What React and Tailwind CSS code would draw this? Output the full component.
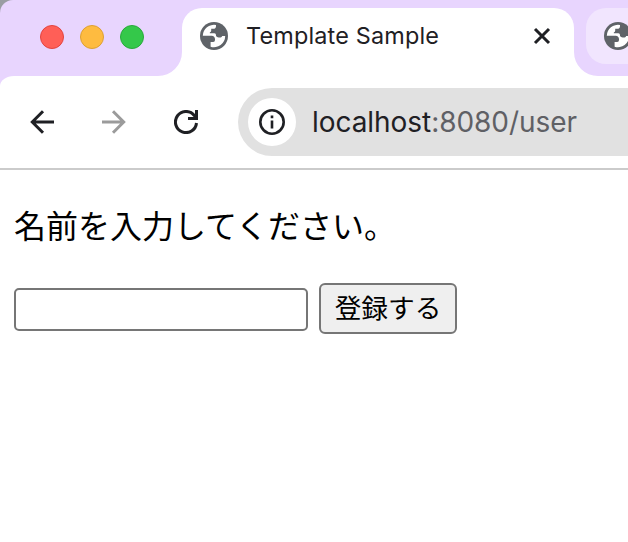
function Globe() {
  return (
    <svg className="h-7 w-7 shrink-0" viewBox="0 0 28 28">
      <circle cx="14" cy="14" r="14" fill="#5f6368" />
      <path
        fill="#fff"
        d="M2.8 13.8A11.2 11.2 0 0 1 16 3V4.2Q15.8 6.8 13.2 6.8H11.2V8.8Q11.2 10.2 9.8 10.4V11.2H14.4Q16 11.4 16 13V14Q16.8 15.4 18.6 15.4H20.6Q21.8 15.2 22.2 14H25.2A11.2 11.2 0 0 1 10.6 24.7V20H13.2Q15 19.8 15 18V17Q14.8 14 11.6 13.8Z"
      />
    </svg>
  );
}

function TabStrip() {
  return (
    <header className="bg-[#9a9da3]">
      <div className="flex h-[76px] items-end rounded-tl-[13px] bg-[#e8d5fe]">
        <div className="flex h-[76px] w-[182px] shrink-0 items-center gap-4 pl-10 pb-[2px]">
          <span className="h-6 w-6 rounded-full border border-[#e2443f] bg-[#ff5f57]" />
          <span className="h-6 w-6 rounded-full border border-[#dda033] bg-[#febb40]" />
          <span className="h-6 w-6 rounded-full border border-[#28a93b] bg-[#34c84a]" />
        </div>
        <div className="relative flex h-[68px] w-[392px] shrink-0 items-center rounded-t-[20px] bg-white pr-[23px] pb-3 pl-[18px]">
          <svg className="absolute bottom-0 -left-6 h-6 w-6" viewBox="0 0 24 24">
            <path d="M24 0A24 24 0 0 1 0 24H24Z" fill="#fff" />
          </svg>
          <svg className="absolute -right-6 bottom-0 h-6 w-6" viewBox="0 0 24 24">
            <path d="M0 0A24 24 0 0 0 24 24H0Z" fill="#fff" />
          </svg>
          <Globe />
          <span className="ml-[18px] flex-1 text-[23.4px] leading-7 tracking-[0.18px] whitespace-nowrap text-[#1f2024]">
            Template Sample
          </span>
          <svg className="h-[18px] w-[18px]" viewBox="0 0 18 18" fill="none" stroke="#1f2024" strokeWidth="3">
            <path d="M2 2L16 16M16 2L2 16" />
          </svg>
        </div>
        <div className="mb-3 ml-3 flex h-14 w-[42px] shrink-0 items-center overflow-hidden rounded-l-[20px] bg-[#f1e5fe] pl-[18px]">
          <Globe />
        </div>
      </div>
    </header>
  );
}

function Toolbar() {
  return (
    <div className="bg-[#e8d5fe]">
      <div className="flex h-[94px] items-center rounded-tl-[14px_10px] border-b-2 border-[#cbcbcb] bg-white pl-[30px]">
        <svg className="h-6 w-6 shrink-0" viewBox="0 0 24 24" fill="none" stroke="#1f2024" strokeWidth="3">
          <path d="M24 12H2.5M13 1.2L2.3 12L13 22.8" />
        </svg>
        <svg className="ml-12 h-6 w-6 shrink-0" viewBox="0 0 24 24" fill="none" stroke="#9b9b9b" strokeWidth="3">
          <path d="M0 12H21.5M11 1.2L21.7 12L11 22.8" />
        </svg>
        <svg className="ml-12 h-6 w-6 shrink-0" viewBox="0 0 24 24" fill="none" stroke="#1f2024" strokeWidth="3">
          <path d="M22.5 13A10.55 10.55 0 1 1 20.3 5.5L22 8M22.5 0V8.4H14" />
        </svg>
        <div className="ml-10 flex h-[68px] flex-1 items-center rounded-l-full bg-[#e1e1e1] pl-[10px]">
          <span className="flex h-12 w-12 items-center justify-center rounded-full bg-white">
            <svg className="h-[26px] w-[26px]" viewBox="0 0 26 26" fill="none" stroke="#1f2024" strokeWidth="2.6">
              <circle cx="13" cy="13" r="11.7" />
              <path d="M13 11.5V19.5M13 6.6V9.2" />
            </svg>
          </span>
          <span className="ml-4 text-[28px] leading-9 tracking-[-0.05px] whitespace-nowrap text-[#1f2024]">
            localhost<span className="text-[#5f6065]">:8080/user</span>
          </span>
        </div>
      </div>
    </div>
  );
}

export default function App() {
  return (
    <div className="h-[542px] w-[628px] overflow-hidden bg-white font-[Inter,'Liberation_Sans',sans-serif]">
      <TabStrip />
      <Toolbar />
      <main className="pt-[30px] pl-[14px] font-['Noto_Sans_CJK_JP',sans-serif] text-black">
        <p className="text-[32px] leading-[48px] whitespace-nowrap">名前を入力してください。</p>
        <form className="mt-[35px] flex items-center gap-[11px]">
          <input
            type="text"
            className="mt-[2px] h-[43px] w-[294px] rounded-[5px] border-2 border-[#767676] bg-white"
          />
          <button
            type="button"
            className="flex h-[51px] w-[138px] items-center justify-center rounded-[6px] border-2 border-[#767676] bg-[#efefef] pb-1 text-[26.67px] leading-10 whitespace-nowrap"
          >
            登録する
          </button>
        </form>
      </main>
    </div>
  );
}
